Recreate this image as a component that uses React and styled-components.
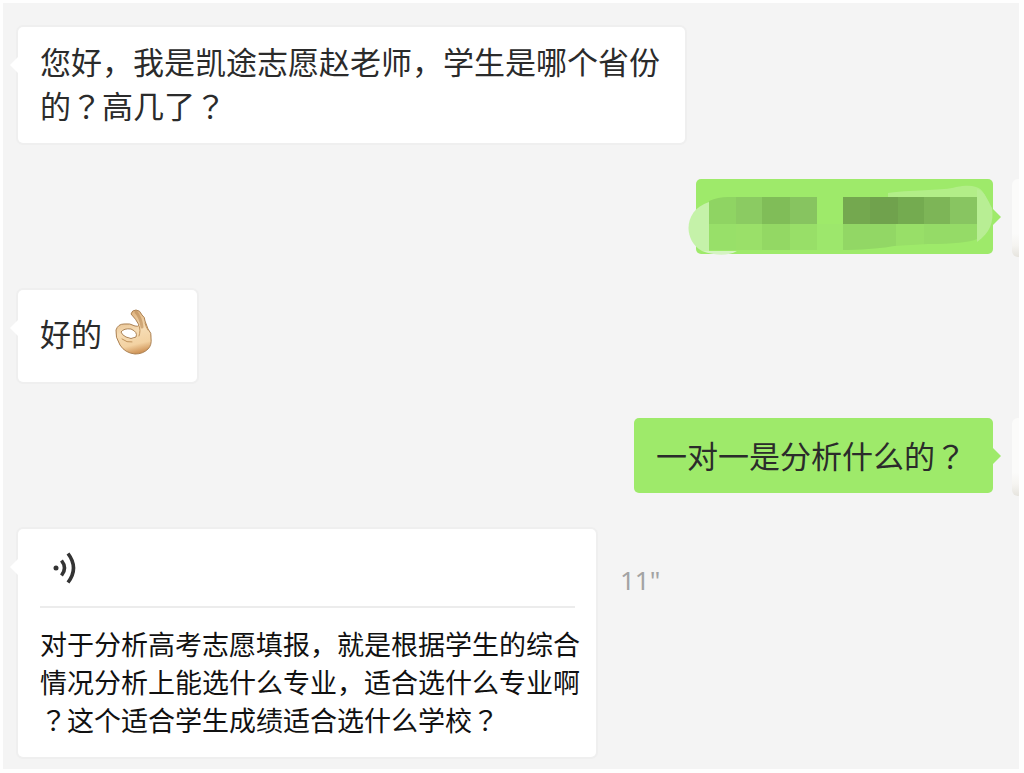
import styled, { createGlobalStyle, css } from 'styled-components'

const GlobalStyle = createGlobalStyle`
  * {
    box-sizing: border-box;
  }
  body {
    margin: 0;
    background: #fefefe;
    color: #2b2b2b;
    font-family: "Noto Sans CJK SC", sans-serif;
  }
`

const Chat = styled.main`
  display: flex;
  flex-direction: column;
  gap: 36px;
  margin: 3px 5px 3px 3px;
  padding: 24px 0 12px 15px;
  background: #f4f4f4;
  overflow: hidden;
`

const Row = styled.div`
  display: flex;
  align-items: flex-start;
  justify-content: ${({ $mine }) => ($mine ? 'flex-end' : 'flex-start')};
`

const arrowLeft = css`
  left: -8px;
  border-right: 8px solid #fff;
`

const arrowRight = css`
  right: -8px;
  border-left: 8px solid #9eea6a;
`

const Bubble = styled.div`
  position: relative;
  padding: 12px 22px 16px;
  background: ${({ $mine }) => ($mine ? '#9eea6a' : '#fff')};
  border-radius: 5px;
  box-shadow: 0 0 0 2px ${({ $mine }) => ($mine ? 'transparent' : '#efefef')};

  &::after {
    content: "";
    position: absolute;
    top: 30px;
    border-top: 8px solid transparent;
    border-bottom: 8px solid transparent;
    ${({ $mine }) => ($mine ? arrowRight : arrowLeft)}
  }
`

const Text = styled.p`
  margin: 0;
  font-size: 31px;
  line-height: 44px;
  white-space: nowrap;
`

const WideBubble = styled(Bubble)`
  min-width: 667px;
`

const EmojiBubble = styled(Bubble)`
  padding: 18px 43px 24px 22px;

  ${Text} {
    display: flex;
    align-items: center;
    gap: 12px;
    line-height: 50px;
  }
`

const MineBubble = styled(Bubble)`
  min-width: ${({ $width }) => $width}px;
  min-height: 75px;
  padding: 15px 22px 16px;
`

const Avatar = styled.div`
  flex: none;
  width: 7px;
  height: 78px;
  margin: 0 0 -3px 19px;
  border-radius: 6px 0 0 6px;
  background: linear-gradient(#fbfbfa 70%, #f5f4f1 85%, #e6e4de);
`

const Mosaic = styled.svg`
  position: absolute;
  left: -8px;
  top: 0;
`

const VoiceBubble = styled(Bubble)`
  padding: 22px 16px 18px 22px;
`

const PlayButton = styled.button`
  display: block;
  margin: 0 0 0 12px;
  padding: 0;
  border: 0;
  background: none;
  line-height: 0;
`

const Divider = styled.hr`
  height: 2px;
  margin: 21px 5px 17px 0;
  border: 0;
  background: #ececec;
`

const Transcript = styled.p`
  margin: 0;
  color: #111;
  font-size: 27px;
  line-height: 38px;
  white-space: nowrap;
`

// question mark set in the middle of its square
const Mark = styled.span`
  font-family: "Noto Sans CJK TC", sans-serif;
`

const Duration = styled.span`
  margin: 35px 0 0 24px;
  color: #a3a3a3;
  font-family: "Noto Sans", sans-serif;
  font-size: 26px;
  line-height: 32px;
`

// x, y, width, fill of every tile, each one 27px tall
const tiles = [
  [21, 18, 27, '#8fd463'],
  [48, 18, 26, '#8bcb62'],
  [74, 18, 28, '#80bd58'],
  [102, 18, 27, '#87c460'],
  [155, 18, 27, '#74a84f'],
  [182, 18, 28, '#70a24d'],
  [210, 18, 26, '#74ab50'],
  [236, 18, 26, '#7db557'],
  [262, 18, 27, '#88c561'],
  [21, 45, 27, '#98e069'],
  [48, 45, 26, '#9ae069'],
  [74, 45, 28, '#93d864'],
  [102, 45, 27, '#98df68'],
  [129, 45, 26, '#9de76c'],
  [155, 45, 53, '#92d765'],
  [208, 45, 28, '#98df68'],
  [236, 45, 53, '#95db67'],
]

const Smudge = () => (
  <Mosaic width="312" height="78" viewBox="0 0 312 78" aria-hidden="true">
    <defs>
      <clipPath id="stroke">
        <path d="M21 22 Q30 18 40 18 H289 V60 Q278 65 240 65 L206 67 Q190 70 160 71 H21 Z" />
      </clipPath>
    </defs>
    <path d="M21 23 C-5 31 -5 62 14 72 H21 Z" fill="#c5f2a9" />
    <path d="M14 72 C28 77 40 77 49 72 Z" fill="#d5f4c2" />
    <path d="M200 14 C230 10 255 12 268 8 C290 4 294 10 298 18 H200 Z" fill="#b2ee88" />
    <path d="M289 10 C297 12 300 22 304 29 C306 43 302 54 289 63 Z" fill="#b8ee94" />
    <g clipPath="url(#stroke)">
      {tiles.map(([x, y, width, fill]) => (
        <rect key={`${x}-${y}`} x={x} y={y} width={width} height="27" fill={fill} />
      ))}
    </g>
  </Mosaic>
)

const OkHand = () => (
  <svg width="40" height="50" viewBox="0 0 40 50" role="img" aria-label="OK">
    <defs>
      <linearGradient id="skin" x1="0.3" y1="0" x2="0.5" y2="1">
        <stop offset="0" stopColor="#dcae78" />
        <stop offset="0.5" stopColor="#f6dcb4" />
        <stop offset="0.8" stopColor="#f3d2a2" />
        <stop offset="1" stopColor="#cf9458" />
      </linearGradient>
    </defs>
    <path
      fill="url(#skin)"
      stroke="#ac8254"
      strokeLinejoin="round"
      fillRule="evenodd"
      d="M17 6 Q18 2 22 2 Q26 2 28 7 Q31 9 31 13 L34 21 Q38 25 37 30 Q38 37 34 41 Q29 46 21 46 Q11 45 6 37 Q1 29 2 22 Q4 16 10 16 Q16 15 21 18 Q24 19 25 17 Q22 11 17 6 Z M7 24 Q10 20 17 21 Q24 24 22 29 Q17 32 12 29 Q8 27 7 24 Z"
    />
    <path
      d="M22 4 Q27 10 28 19"
      fill="none"
      stroke="#b98a56"
      strokeWidth="3"
      strokeLinecap="round"
      opacity="0.6"
    />
    <path
      d="M25 18 Q27 22 25 28 M8 31 Q13 35 18 34 M31 15 Q32 19 34 22"
      fill="none"
      stroke="#c1935c"
      strokeLinecap="round"
    />
  </svg>
)

const VoiceIcon = () => (
  <svg width="26" height="34" viewBox="0 0 26 34" fill="none" stroke="#333" strokeWidth="3.6">
    <circle cx="4" cy="17" r="2.5" fill="#333" stroke="none" />
    <path d="M9.5 9.5 Q15.5 17 9.5 24.5" />
    <path d="M16 2.5 Q27 17 16 31.5" />
  </svg>
)

const App = () => {
  return (
    <>
      <GlobalStyle />
      <Chat>
        <Row>
          <WideBubble>
            <Text>
              您好，我是凯途志愿赵老师，学生是哪个省份
              <br />
              的<Mark>？</Mark>高几了<Mark>？</Mark>
            </Text>
          </WideBubble>
        </Row>
        <Row $mine>
          <MineBubble $mine $width={297}>
            <Smudge />
          </MineBubble>
          <Avatar />
        </Row>
        <Row>
          <EmojiBubble>
            <Text>
              好的
              <OkHand />
            </Text>
          </EmojiBubble>
        </Row>
        <Row $mine>
          <MineBubble $mine $width={359}>
            <Text>一对一是分析什么的<Mark>？</Mark></Text>
          </MineBubble>
          <Avatar />
        </Row>
        <Row>
          <VoiceBubble>
            <PlayButton type="button" aria-label="播放语音">
              <VoiceIcon />
            </PlayButton>
            <Divider />
            <Transcript>
              对于分析高考志愿填报，就是根据学生的综合
              <br />
              情况分析上能选什么专业，适合选什么专业啊
              <br />
              <Mark>？</Mark>这个适合学生成绩适合选什么学校<Mark>？</Mark>
            </Transcript>
          </VoiceBubble>
          <Duration>11"</Duration>
        </Row>
      </Chat>
    </>
  )
}

export default App
